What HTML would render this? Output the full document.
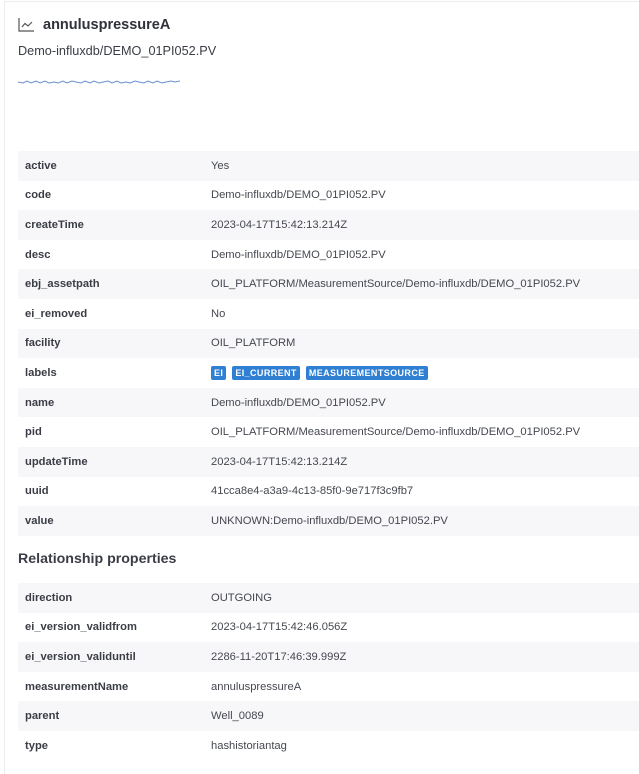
<!DOCTYPE html>
<html><head><meta charset="utf-8"><style>
*{margin:0;padding:0;box-sizing:border-box}
body{width:639px;height:772px;background:#fff;font-family:"Liberation Sans",sans-serif;color:#3a3d45;position:relative;overflow:hidden}
.frame{position:absolute;left:4px;top:1px;right:-2px;bottom:-2px;border-left:1px solid #ececee;border-top:1px solid #ececee}
.title{position:absolute;left:18px;top:17px;font-size:14.5px;font-weight:bold;color:#2f323a;display:flex;align-items:center}
.title svg{margin-right:9px}
.sub{position:absolute;left:18px;top:44px;font-size:12.7px;color:#3a3d45}
.spark{position:absolute;left:18px;top:78px}
table{position:absolute;left:18px;width:621px;border-collapse:collapse;font-size:11.2px}
td{height:29.6px;padding:0 7px;vertical-align:middle}
td.k{width:186px;font-weight:bold;color:#3a3d45}
td.v{color:#454850}
tr:nth-child(odd){background:#f7f7f9}
.h2{position:absolute;left:18px;top:551px;font-size:14.2px;font-weight:bold;color:#3a3d45}
.b{display:inline-block;background:#2f7fd3;color:#fff;font-size:9px;font-weight:bold;padding:2px 3px;border-radius:2px;margin-right:6px;letter-spacing:.4px}
</style></head><body>
<div class="frame"></div>
<div class="title"><svg width="16" height="14" viewBox="0 0 16 14"><path d="M1 0V13H16" stroke="#555" fill="none" stroke-width="1.2"/><path d="M4 9L7 5.5L10 8L14 4" stroke="#555" fill="none" stroke-width="1.2"/></svg>annuluspressureA</div>
<div class="sub">Demo-influxdb/DEMO_01PI052.PV</div>
<svg class="spark" width="162" height="8" viewBox="0 0 162 8"><path d="M0 4 L5 5 L9 3 L13 5 L18 3 L22 5 L27 3 L31 5 L36 4 L40 5 L45 3 L49 5 L54 3 L58 4 L63 5 L67 3 L72 5 L76 3 L81 5 L85 4 L90 3 L94 5 L99 3 L103 5 L108 4 L112 5 L117 3 L121 4 L126 5 L130 3 L135 5 L139 3 L144 5 L148 4 L153 3 L157 4 L162 3" stroke="#6a8fcf" fill="none" stroke-width="1"/></svg>
<table style="top:151px">
<tr><td class="k">active</td><td class="v">Yes</td></tr>
<tr><td class="k">code</td><td class="v">Demo-influxdb/DEMO_01PI052.PV</td></tr>
<tr><td class="k">createTime</td><td class="v">2023-04-17T15:42:13.214Z</td></tr>
<tr><td class="k">desc</td><td class="v">Demo-influxdb/DEMO_01PI052.PV</td></tr>
<tr><td class="k">ebj_assetpath</td><td class="v">OIL_PLATFORM/MeasurementSource/Demo-influxdb/DEMO_01PI052.PV</td></tr>
<tr><td class="k">ei_removed</td><td class="v">No</td></tr>
<tr><td class="k">facility</td><td class="v">OIL_PLATFORM</td></tr>
<tr><td class="k">labels</td><td class="v"><span class="b">EI</span><span class="b">EI_CURRENT</span><span class="b">MEASUREMENTSOURCE</span></td></tr>
<tr><td class="k">name</td><td class="v">Demo-influxdb/DEMO_01PI052.PV</td></tr>
<tr><td class="k">pid</td><td class="v">OIL_PLATFORM/MeasurementSource/Demo-influxdb/DEMO_01PI052.PV</td></tr>
<tr><td class="k">updateTime</td><td class="v">2023-04-17T15:42:13.214Z</td></tr>
<tr><td class="k">uuid</td><td class="v">41cca8e4-a3a9-4c13-85f0-9e717f3c9fb7</td></tr>
<tr><td class="k">value</td><td class="v">UNKNOWN:Demo-influxdb/DEMO_01PI052.PV</td></tr>
</table>
<div class="h2">Relationship properties</div>
<table style="top:583px">
<tr><td class="k">direction</td><td class="v">OUTGOING</td></tr>
<tr><td class="k">ei_version_validfrom</td><td class="v">2023-04-17T15:42:46.056Z</td></tr>
<tr><td class="k">ei_version_validuntil</td><td class="v">2286-11-20T17:46:39.999Z</td></tr>
<tr><td class="k">measurementName</td><td class="v">annuluspressureA</td></tr>
<tr><td class="k">parent</td><td class="v">Well_0089</td></tr>
<tr><td class="k">type</td><td class="v">hashistoriantag</td></tr>
</table>
</body></html>
